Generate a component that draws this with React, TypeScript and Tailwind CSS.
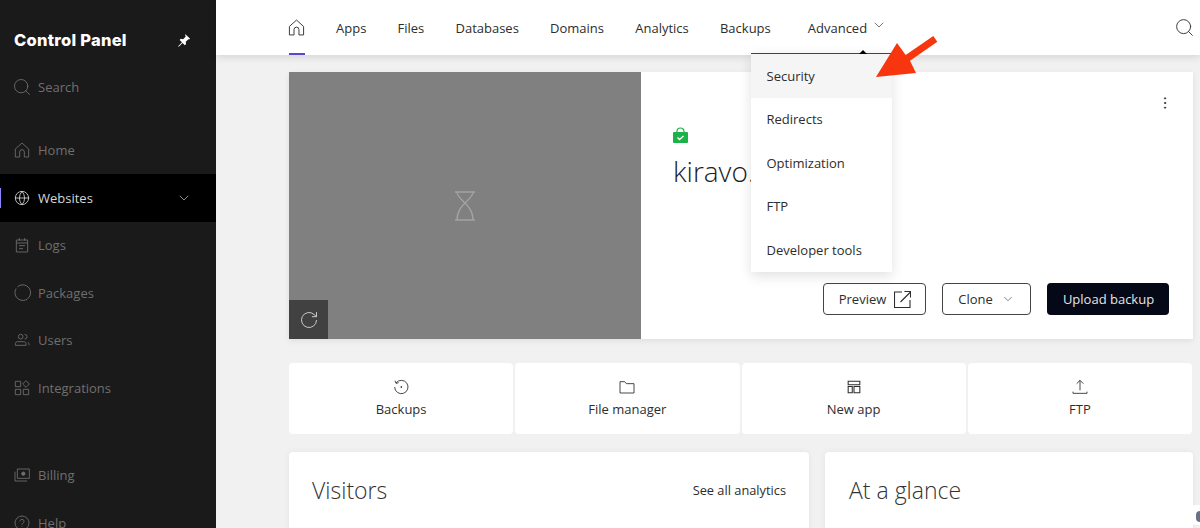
import type { ReactNode } from 'react'
import { ChevronDown, EllipsisVertical, Globe, Search } from 'lucide-react'

const font = { fontFamily: '"Open Sans", "Noto Sans", sans-serif' }

function Ico({ children, className = 'size-4' }: { children: ReactNode; className?: string }) {
  return (
    <svg viewBox="0 0 24 24" fill="none" stroke="currentColor" strokeWidth="1.3" className={className}>
      {children}
    </svg>
  )
}

const HomeIcon = ({ className }: { className?: string }) => (
  <Ico className={className}>
    <path d="M2 10.500 12 1.500l10 9v12h-6.500v-7.500a3.500 3.500 0 0 0-7 0v7.500H2z" strokeLinejoin="round" />
  </Ico>
)

const LogsIcon = () => (
  <Ico>
    <path d="M3.500 4.500h17v18h-17zM3.500 9h17M8 1.500v4M16 1.500v4M7.500 13h9M7.500 17.500h6" />
  </Ico>
)

const PackagesIcon = () => (
  <Ico className="size-[17px]">
    <path d="M5 4a11 11 0 1 1-2 2.400" />
  </Ico>
)

const UsersIcon = () => (
  <Ico>
    <circle cx="10" cy="7" r="3.500" />
    <path d="M16 3.500a3.500 3.500 0 0 1 0 7M2 20v-2.500c0-2 1.500-3 3.500-3h9c2 0 3.500 1 3.500 3V20zM21 15.500c1 .6 1.500 1.500 1.500 3V20" />
  </Ico>
)

const IntegrationsIcon = () => (
  <Ico>
    <path d="M2 2h8v8H2zM2 14h8v8H2zM14 14h8v8h-8zM18 1l5 5-5 5-5-5z" />
  </Ico>
)

const BillingIcon = () => (
  <Ico>
    <path d="M5 3h18v14H5zM1.500 7v14h18" />
    <circle cx="14" cy="10" r="2.500" fill="currentColor" />
  </Ico>
)

const HelpIcon = () => (
  <Ico>
    <circle cx="12" cy="12" r="10.500" />
    <path d="M9 9.500a3 3 0 1 1 4.500 2.600c-1 .6-1.500 1.200-1.500 2.400M12 17v1" />
  </Ico>
)

function SideItem({ icon, label, active }: { icon: ReactNode; label: string; active?: boolean }) {
  return (
    <div
      className={
        active
          ? 'relative flex h-[47.500px] items-center bg-black pl-[14px] pr-6 text-[#d6d6d6]'
          : 'flex h-[47.500px] items-center pl-[14px] pr-6 text-[#6f6f6f]'
      }
    >
      {active && <span className="absolute left-0 top-[14px] h-5 w-px bg-[#8c85ff]" />}
      <span className="flex w-6 shrink-0">{icon}</span>
      <span className="flex-1 pt-px text-[13px]">{label}</span>
      {active && <ChevronDown className="size-4" strokeWidth={1} />}
    </div>
  )
}

function Sidebar() {
  return (
    <aside className="flex h-full w-[216px] shrink-0 flex-col bg-[#1a1a1a]">
      <div className="flex items-center justify-between pl-[14px] pr-[25px] pt-[30px]">
        <span className="text-[16.500px] font-extrabold leading-5 tracking-[0.25px] text-white" style={{ fontFamily: 'Inter, sans-serif' }}>
          Control Panel
        </span>
        <svg viewBox="0 0 24 24" className="size-[14px] text-white" fill="currentColor">
          <path d="M14 1.500 22.500 10l-2 1-1-.5-4.500 4.500.5 4-2 2-4-4-6.500 6.500-1-1L8.500 16l-4-4 2-2 4 .5L15 6l-.500-1z" />
        </svg>
      </div>
      <div className="mt-[27px] flex h-5 items-center pl-[11.500px] text-[#6f6f6f]">
        <Search className="mr-[6.500px] size-[20px]" strokeWidth={1.05} />
        <span className="pt-0.5 text-[13px]">Search</span>
      </div>
      <nav className="mt-[29.500px]">
        <SideItem icon={<HomeIcon className="size-4" />} label="Home" />
        <SideItem active icon={<Globe className="size-4" strokeWidth={1.3} />} label="Websites" />
        <SideItem icon={<LogsIcon />} label="Logs" />
        <SideItem icon={<PackagesIcon />} label="Packages" />
        <SideItem icon={<UsersIcon />} label="Users" />
        <SideItem icon={<IntegrationsIcon />} label="Integrations" />
      </nav>
      <nav className="mt-[40px]">
        <SideItem icon={<BillingIcon />} label="Billing" />
        <SideItem icon={<HelpIcon />} label="Help" />
      </nav>
    </aside>
  )
}

function TopNav() {
  const links = ['Apps', 'Files', 'Databases', 'Domains', 'Analytics', 'Backups']
  return (
    <header className="relative z-10 flex h-[55px] shrink-0 items-center bg-white pl-[72px] pr-[5px] text-[13px] text-[#2d2d2d] shadow-[0_2px_8px_rgba(0,0,0,0.12)]">
      <div className="relative flex h-full w-[17px] items-center">
        <HomeIcon className="size-[17px]" />
        <span className="absolute bottom-0 left-px h-0.5 w-4 bg-[#5b45d6]" />
      </div>
      <div className="ml-[31px] flex gap-[31.200px] pt-0.5">
        {links.map((link) => (
          <span key={link}>{link}</span>
        ))}
      </div>
      <div className="relative ml-[37px] flex h-full items-center gap-1">
        <span className="pt-0.5">Advanced</span>
        <ChevronDown className="mb-[6px] size-4" strokeWidth={1} />
      </div>
      <Search className="ml-auto size-[21px]" strokeWidth={1.05} />
    </header>
  )
}

function Dropdown() {
  const items = ['Security', 'Redirects', 'Optimization', 'FTP', 'Developer tools']
  return (
    <div className="absolute left-[535px] top-[53px] z-20 w-[141px] border-t border-[#444] bg-white text-[13px] text-[#2d2d2d] shadow-[0_4px_12px_rgba(0,0,0,0.12)]">
      <span className="absolute -top-[4px] left-[108px] size-0 border-x-[4px] border-b-[4px] border-x-transparent border-b-black" />
      {items.map((item, i) => (
        <div key={item} className={i === 0 ? 'flex h-[44px] items-center bg-[#f5f5f5] pl-[15.500px] pt-0.5' : 'flex h-[43.500px] items-center pl-[15.500px]'}>
          {item}
        </div>
      ))}
    </div>
  )
}

function Tile({ icon, label }: { icon: ReactNode; label: string }) {
  return (
    <div className="flex h-[71px] flex-col items-center rounded-sm bg-white pt-[15px] text-[13px] leading-[18px] text-[#2d2d2d]">
      <div className="flex h-[17px] items-center">{icon}</div>
      <span className="mt-[5px]">{label}</span>
    </div>
  )
}

function HeroCard() {
  return (
    <section className="flex h-[267px] bg-white shadow-[0_2px_6px_rgba(0,0,0,0.08)]">
      <div className="relative flex w-[352px] shrink-0 items-center justify-center bg-[#808080]">
        <svg viewBox="0 0 20 30" fill="none" stroke="#a3a3a3" strokeWidth="1.300" className="h-[30px] w-5">
          <path d="M0 1h20M0 29h20M2 1c0 8 16 12 16 28M18 1C18 9 2 13 2 29" />
        </svg>
        <button className="absolute bottom-0 left-0 flex size-[39px] items-center justify-center bg-[#414141] text-[#c9c9c9]">
          <svg viewBox="0 0 24 24" fill="none" stroke="currentColor" strokeWidth="1.200" className="size-[20px]">
            <path d="M21 12a9 9 0 1 1-3-6.700L21 8M21 2.500V8h-5.500" />
          </svg>
        </button>
      </div>
      <div className="flex flex-1 flex-col justify-between pb-6 pl-8 pr-6">
        <div className="flex justify-between">
          <div className="pt-[55px]">
            <svg viewBox="0 0 15 16" className="h-4 w-[15px]">
              <path d="M4 7V4.500a3.500 3.500 0 0 1 7 0V7" fill="none" stroke="#1eb14a" strokeWidth="1.200" />
              <rect y="5" width="15" height="11" rx="1" fill="#1eb14a" />
              <path d="m4.500 10.500 2 2 4-3.500" fill="none" stroke="#fff" strokeWidth="1.300" />
            </svg>
            <h1 className="mt-[9px] text-[28px] font-light leading-[38px] text-[#1d1d1d]">kiravo.</h1>
          </div>
          <EllipsisVertical className="mr-[-4px] mt-[23px] size-4 text-[#333]" strokeWidth={1.500} />
        </div>
        <div className="flex justify-end gap-4 text-[13px]">
          <button className="flex h-8 w-[103px] items-center justify-center gap-2 rounded border border-[#444] text-[#2d2d2d]">
            <span className="pl-px pt-0.5">Preview</span>
            <svg viewBox="0 0 17 17" fill="none" stroke="currentColor" strokeWidth="1.100" className="size-[17px]">
              <path d="M8 1H.500v15.500H16V9M6.500 11 16 1.500M10.500 .500h6v6" />
            </svg>
          </button>
          <button className="flex h-8 w-[89px] items-center justify-center gap-2 rounded border border-[#444] text-[#2d2d2d]">
            <span className="pt-0.5">Clone</span>
            <ChevronDown className="size-[14px]" strokeWidth={1} />
          </button>
          <button className="h-8 w-[122px] rounded bg-[#050816] pl-px pt-0.5 text-[#e5e5e5]">Upload backup</button>
        </div>
      </div>
    </section>
  )
}

function Tiles() {
  return (
    <section className="mr-px mt-6 grid grid-cols-4 gap-0.5">
      <Tile
        label="Backups"
        icon={
          <Ico>
            <path d="M4.500 6a10 10 0 1 1-2 6M3 2.500 4.500 6.500 8.500 5.500" />
            <circle cx="12.500" cy="12" r=".8" fill="currentColor" />
          </Ico>
        }
      />
      <Tile
        label="File manager"
        icon={
          <Ico>
            <path d="M1.500 4h7l2.500 3h11.500v14h-21z" />
          </Ico>
        }
      />
      <Tile
        label="New app"
        icon={
          <Ico className="size-[14px]">
            <path d="M2 2h20v6H2zM2 11h7v11H2zM12 11h10v11H12z" strokeWidth="1.800" />
          </Ico>
        }
      />
      <Tile
        label="FTP"
        icon={
          <Ico>
            <path d="M12 17V2M7 7l5-5 5 5M1.500 19v2.500h21V19" />
          </Ico>
        }
      />
    </section>
  )
}

export default function App() {
  return (
    <div className="relative flex h-[528px] w-[1200px] overflow-hidden bg-[#f1f1f1]" style={font}>
      <Sidebar />
      <main className="relative flex min-w-0 flex-1 flex-col">
        <TopNav />
        <Dropdown />
        <div className="flex-1 pl-[73px] pr-[7px] pt-[17px]">
          <HeroCard />
          <Tiles />
          <section className="mt-[18px] grid grid-cols-[520px_368px] gap-4">
            <div className="flex h-[100px] items-start justify-between rounded-sm bg-white pl-[23px] pr-[23px] pt-[22px] shadow-[0_0_6px_rgba(0,0,0,0.06)]">
              <h2 className="text-[23px] font-light leading-[32px] text-[#333]">Visitors</h2>
              <a className="mt-[7px] text-[12.800px] text-[#2d2d2d]">See all analytics</a>
            </div>
            <div className="h-[100px] rounded-sm bg-white pl-6 pt-[22px] shadow-[0_0_6px_rgba(0,0,0,0.06)]">
              <h2 className="text-[23px] font-light leading-[32px] text-[#333]">At a glance</h2>
            </div>
          </section>
        </div>
        {/* red callout arrow drawn over the menu */}
        <svg viewBox="0 0 70 50" className="absolute left-[658px] top-[33px] z-30 h-[50px] w-[70px]" fill="#f7360f">
          <path d="M2 44 23 10l8.700 12L59.300 3l4 5.700L36 27.700 42 40z" />
        </svg>
        {/* chat widget peeking in at the corner */}
        <div className="absolute bottom-[3px] right-0 h-[20px] w-[14px] rounded-l-full bg-white">
          <span className="absolute right-0 top-[6px] h-[11px] w-[4px] rounded-l-full bg-[#6b7085]" />
        </div>
      </main>
    </div>
  )
}
